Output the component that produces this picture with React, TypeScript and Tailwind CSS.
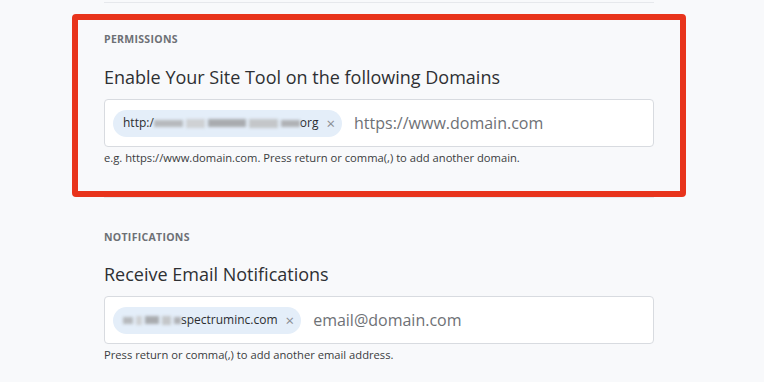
const font = { fontFamily: '"Open Sans", "Liberation Sans", sans-serif' };

function Blur({ width }: { width: number }) {
  // redacted part of the address, shown blurred in the screenshot
  return (
    <span className="inline-flex items-center h-[10px] blur-[1.5px] gap-[3px]" style={{ width }}>
      <span className="h-[7px] flex-[3] bg-[#b7b9bd]" />
      <span className="h-[9px] flex-[2] bg-[#cfd1d4]" />
      <span className="h-[8px] flex-[4] bg-[#a9abaf]" />
      <span className="h-[9px] flex-[3] bg-[#c4c6c9]" />
      <span className="h-[7px] flex-[2] bg-[#b0b2b6]" />
    </span>
  );
}

function Chip({ children }: { children: React.ReactNode }) {
  return (
    <div className="flex items-center h-[27px] pl-[10px] pr-[7px] rounded-full bg-[#e4eef9] text-[12px] text-[#2b2d30]">
      {children}
      <span className="ml-[8px] text-[15px] text-[#8a8d92] leading-none">×</span>
    </div>
  );
}

function Section({
  label,
  title,
  chip,
  placeholder,
  help,
  compact,
}: {
  label: string;
  title: string;
  chip: React.ReactNode;
  placeholder: string;
  help: string;
  compact?: boolean;
}) {
  return (
    <div>
      <div className="text-[10.5px] leading-[16px] font-bold tracking-[0.3px] text-[#6d7075]">{label}</div>
      <div className={`${compact ? 'mt-[17px]' : 'mt-[18px]'} text-[18px] leading-[24px] text-[#2e3033]`}>{title}</div>
      <div className="mt-[10px] h-[48px] flex items-center gap-[12px] px-[8px] bg-white border border-[#d8dbe0] rounded-[4px]">
        {chip}
        <span className="text-[16px] text-[#6e7176]">{placeholder}</span>
      </div>
      <div className="mt-[3px] text-[11.2px] leading-[16px] text-[#3a3c40]">{help}</div>
    </div>
  );
}

export default function App() {
  return (
    <div className="relative w-[764px] h-[382px] overflow-hidden bg-[#f8f9fb]" style={font}>
      <div className="ml-[104px] w-[550px]">
        <div className="mt-[2px] h-px bg-[#e6e8ec]" />
        <div className="mt-[28px]">
          <Section
            label="PERMISSIONS"
            title="Enable Your Site Tool on the following Domains"
            chip={
              <Chip>
                <span>http:/</span>
                <Blur width={146} />
                <span>org</span>
              </Chip>
            }
            placeholder="https://www.domain.com"
            help="e.g. https://www.domain.com. Press return or comma(,) to add another domain."
          />
        </div>
        <div className="mt-[31px] h-px bg-[#e6e8ec]" />
        <div className="mt-[31px]">
          <Section
            compact
            label="NOTIFICATIONS"
            title="Receive Email Notifications"
            chip={
              <Chip>
                <Blur width={58} />
                <span>spectruminc.com</span>
              </Chip>
            }
            placeholder="email@domain.com"
            help="Press return or comma(,) to add another email address."
          />
        </div>
      </div>

      {/* red annotation frame over the permissions block */}
      <div className="absolute left-[72px] top-[14px] w-[614px] h-[183px] border-[6px] border-[#e8341c] rounded-[4px]" />
    </div>
  );
}
